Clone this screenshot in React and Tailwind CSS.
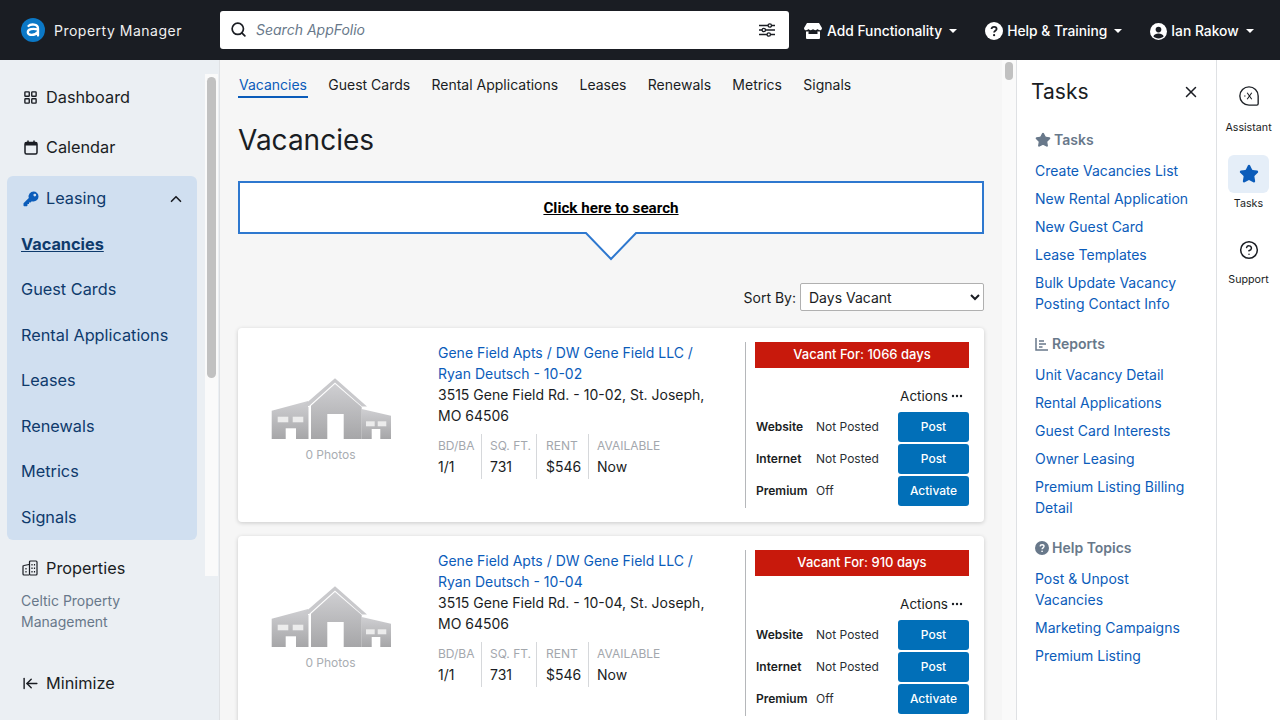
import React from "react";
import {
  Search,
  LayoutGrid,
  ChevronUp,
  X,
  Star,
  CircleHelp,
  ArrowLeftToLine,
} from "lucide-react";

const FONT = { fontFamily: "Inter, 'Noto Sans', sans-serif" };

const leasingItems = ["Guest Cards", "Rental Applications", "Leases", "Renewals", "Metrics", "Signals"];
const tabs = ["Guest Cards", "Rental Applications", "Leases", "Renewals", "Metrics", "Signals"];

const units = [
  { unit: "10-02", days: 1066 },
  { unit: "10-04", days: 910 },
];

function Caret() {
  return <span className="ml-[7px] w-0 h-0 border-x-[4px] border-x-transparent border-t-[4px] border-t-white" />;
}

function Logo() {
  return (
    <svg width="24" height="24" viewBox="0 0 24 24">
      <circle cx="12" cy="12" r="12" fill="#0b78c6" />
      <path
        d="M7.500 8 C9.500 5.800 17 5.600 17 10.500 V17.500 M16.800 11.500 C12 10.300 6.800 11 6.800 14.300 C6.800 17.800 14 18 16.800 14"
        fill="none"
        stroke="white"
        strokeWidth="2.300"
        strokeLinecap="round"
      />
    </svg>
  );
}

function Storefront() {
  return (
    <svg width="18" height="18" viewBox="0 0 18 18" fill="white">
      <path d="M3 1h12l3 5c0 1.500-1 2.300-2.200 2.300-1 0-1.800-.5-2.300-1.200-.5.7-1.400 1.200-2.200 1.200S9.500 7.800 9 7.100c-.5.7-1.300 1.200-2.300 1.200S5 7.800 4.500 7.100C4 7.800 3.200 8.300 2.200 8.300 1 8.300 0 7.500 0 6z" />
      <path d="M2 9.500c1 .2 2 0 2.500-.3V12h9V9.200c.5.3 1.500.5 2.500.3V16a1 1 0 0 1-1 1H3a1 1 0 0 1-1-1z" />
    </svg>
  );
}

function Sliders() {
  return (
    <svg width="16" height="14" viewBox="0 0 16 14" fill="none" stroke="#1a1d23" strokeWidth="1.300">
      <path d="M0 2.500h9M12.500 2.500H16M0 7h3M6.500 7H16M0 11.500h8M11.500 11.500H16" />
      <circle cx="10.800" cy="2.500" r="1.700" />
      <circle cx="4.800" cy="7" r="1.700" />
      <circle cx="9.800" cy="11.500" r="1.700" />
    </svg>
  );
}

function HelpSolid({ size = 18, fill = "white", mark = "#1a1d23" }) {
  return (
    <svg width={size} height={size} viewBox="0 0 18 18">
      <circle cx="9" cy="9" r="9" fill={fill} />
      <path d="M6.500 7c.2-1.500 1.200-2.200 2.600-2.200 1.500 0 2.500.9 2.500 2.100 0 1.900-2.500 1.900-2.500 3.700" fill="none" stroke={mark} strokeWidth="1.800" />
      <circle cx="9.100" cy="13.200" r="1.100" fill={mark} />
    </svg>
  );
}

function UserSolid() {
  return (
    <svg width="17" height="17" viewBox="0 0 18 18">
      <circle cx="9" cy="9" r="9" fill="white" />
      <circle cx="9" cy="7" r="3" fill="#1a1d23" />
      <path d="M3.500 14c1-2.200 3-3 5.500-3s4.500.8 5.500 3c-1.300 1.400-3.300 2.300-5.500 2.300S4.800 15.400 3.500 14z" fill="#1a1d23" />
    </svg>
  );
}

function KeyIcon() {
  return (
    <svg width="16" height="16" viewBox="0 0 16 16" fill="#0b5cba">
      <path d="M10.500 0.500a5 5 0 0 1 0 10c-.6 0-1.200-.1-1.700-.3L7.500 11.500H6v1.500H4.500v1.500l-.7.7H1.200A.7.700 0 0 1 .5 14.500v-2.300l5.300-5.300A5 5 0 0 1 10.500.5zm1.300 2.200a1.400 1.400 0 1 0 0 2.800 1.400 1.400 0 0 0 0-2.800z" />
    </svg>
  );
}

function CalendarIcon() {
  return (
    <svg width="14" height="15" viewBox="0 0 14 15" fill="none">
      <rect x="1" y="2.500" width="12" height="11.500" rx="1.500" stroke="#1a1d23" strokeWidth="1.500" />
      <rect x="1" y="2.500" width="12" height="3" fill="#1a1d23" />
      <path d="M4 0.500v2.500M10 0.500v2.500" stroke="#1a1d23" strokeWidth="1.500" />
    </svg>
  );
}

function BuildingsIcon() {
  return (
    <svg width="16" height="16" viewBox="0 0 16 16" fill="none" stroke="#1a1d23" strokeWidth="1.200">
      <path d="M7 4.500 L2 5.500 a1 1 0 0 0-1 1V14a1 1 0 0 0 1 1h5" />
      <rect x="7.500" y="1" width="7.500" height="14" rx="1" />
      <path d="M10 4v1.500M12.500 4v1.500M10 7.500V9M12.500 7.500V9M10 11v1.500M12.500 11v1.500M4 8v1.500M4 11v1.500" />
    </svg>
  );
}

function AssistantIcon() {
  return (
    <svg width="22" height="24" viewBox="0 0 24 24" fill="none" stroke="#1f2328" strokeWidth="1.500">
      <path d="M12 2a10 10 0 1 0 0 20h8.500a1.500 1.500 0 0 0 1.500-1.500V12A10 10 0 0 0 12 2z" />
      <path d="M10 8.500l5 7M15 8.500l-5 7" strokeWidth="1.200" />
      <circle cx="7.500" cy="12" r=".7" fill="#1f2328" stroke="none" />
    </svg>
  );
}

function ReportsIcon() {
  return (
    <svg width="14" height="14" viewBox="0 0 14 14" fill="none" stroke="#68788a" strokeWidth="1.500">
      <path d="M1 1v12h12M4 4h5M4 7h7M4 10h3.500" />
    </svg>
  );
}

function Warehouse() {
  return (
    <svg width="120" height="64" viewBox="0 0 120 64">
      <defs>
        <linearGradient id="wh" x1="0" y1="0" x2="0" y2="1">
          <stop offset="0" stopColor="#cfcfd2" />
          <stop offset="1" stopColor="#a6a6a8" />
        </linearGradient>
      </defs>
      <path d="M0.700 33.700 L37 24 V30 H37.500 V62 H0.700 Z" fill="url(#wh)" />
      <path d="M90.700 32 L120 38.700 V62 H90.700 Z" fill="url(#wh)" />
      <path d="M64 7 L90.700 30 V62 H40 V28.700 Z" fill="url(#wh)" />
      <path d="M32 29 H38 L64 5.500 L91 29.500 H96 L64 1.300 Z" fill="#c9c9cc" />
      <rect x="6.700" y="39.700" width="10.600" height="5.600" fill="#ececec" />
      <rect x="21.700" y="39.700" width="10.600" height="5.600" fill="#ececec" />
      <rect x="14.700" y="51.300" width="10.300" height="10.700" fill="#fff" />
      <rect x="56.300" y="37" width="16.400" height="25" fill="#fff" />
      <rect x="95" y="44.300" width="8.700" height="5" fill="#ececec" />
      <rect x="106.700" y="44.300" width="8.600" height="5" fill="#ececec" />
      <rect x="100.700" y="52" width="8.600" height="10" fill="#fff" />
    </svg>
  );
}

function Stat({ label, value, className }) {
  return (
    <div className={className}>
      <div className="text-[12px] leading-[20px] text-[#a3a7ad] mt-[2px]">{label}</div>
      <div className="text-[14px] leading-[21px] text-[#1a1d23] pb-[2px]">{value}</div>
    </div>
  );
}

function Posting({ label, status, action }) {
  return (
    <div className="flex items-center h-[32px]">
      <div className="w-[61px] pl-[1px] text-[12px] font-semibold text-[#1a1d23]">{label}</div>
      <div className="flex-1 text-[12px] text-[#2b2f35]">{status}</div>
      <button className="w-[71px] h-[30px] bg-[#016fb8] rounded-[3px] text-white text-[12px] font-medium">{action}</button>
    </div>
  );
}

function VacancyCard({ unit, days }) {
  return (
    <div className="flex bg-white rounded-[4px] shadow-[0_1px_4px_rgba(0,0,0,0.18)] h-[194px] mb-[14px] shrink-0">
      <div className="w-[200px] shrink-0 flex flex-col items-center pt-[49px] pr-[15px]">
        <Warehouse />
        <div className="text-[12px] leading-[14px] text-[#a9adb2] mt-[7px]">0 Photos</div>
      </div>
      <div className="w-[307px] shrink-0 pt-[14px] text-[14px] leading-[21px] text-[#1a1d23]">
        <div className="text-[#0b5cba] w-[280px]">Gene Field Apts / DW Gene Field LLC / Ryan Deutsch - {unit}</div>
        <div className="w-[280px]">3515 Gene Field Rd. - {unit}, St. Joseph, MO 64506</div>
        <div className="flex mt-[8px]">
          <Stat label="BD/BA" value="1/1" className="w-[43px]" />
          <Stat label="SQ. FT." value="731" className="w-[55px] border-l border-[#d6d8db] pl-[8px]" />
          <Stat label="RENT" value="$546" className="w-[52px] border-l border-[#d6d8db] pl-[9px]" />
          <Stat label="AVAILABLE" value="Now" className="border-l border-[#d6d8db] pl-[8px]" />
        </div>
      </div>
      <div className="flex-1 my-[14px] mr-[15px] border-l border-[#b5b7ba] pl-[9px]">
        <div className="h-[26px] bg-[#c8190c] text-white text-[13px] font-medium flex items-center justify-center">
          Vacant For: {days} days
        </div>
        <div className="flex justify-end items-center h-[20px] mt-[18px] mb-[5px] pr-[6px] text-[13.500px] text-[#1a1d23]">
          Actions
          <svg className="ml-[3px]" width="12" height="4" viewBox="0 0 12 4" fill="#1a1d23">
            <circle cx="2" cy="2" r="1.200" />
            <circle cx="6" cy="2" r="1.200" />
            <circle cx="10" cy="2" r="1.200" />
          </svg>
        </div>
        <Posting label="Website" status="Not Posted" action="Post" />
        <Posting label="Internet" status="Not Posted" action="Post" />
        <Posting label="Premium" status="Off" action="Activate" />
      </div>
    </div>
  );
}

function TaskLink({ children }) {
  return <div className="text-[14px] leading-[21px] text-[#0b5cba] mb-[7px]">{children}</div>;
}

function TaskHeading({ icon, children }) {
  return (
    <div className="flex items-center gap-[3px] text-[14px] leading-[21px] font-semibold text-[#68788a] mb-[10px]">
      {icon}
      {children}
    </div>
  );
}

function App() {
  return (
    <div className="w-[1280px] h-[720px] flex flex-col overflow-hidden bg-white" style={FONT}>
      <header className="h-[60px] shrink-0 bg-[#1a1d23] flex items-center text-white">
        <div className="w-[220px] shrink-0 flex items-center pl-[21px] gap-[9px]">
          <Logo />
          <span className="text-[14px] tracking-[0.500px] text-[#f0f0f0]">Property Manager</span>
        </div>
        <div className="w-[569px] h-[38px] bg-white rounded-[3px] flex items-center pl-[10px] pr-[14px] -mt-[1px]">
          <Search size={17} color="#1a1d23" strokeWidth={2.400} />
          <span className="flex-1 ml-[9px] text-[14px] italic text-[#68788a]">Search AppFolio</span>
          <Sliders />
        </div>
        <div className="flex items-center text-[13.800px] font-medium ml-[15px] mt-[2px]">
          <Storefront />
          <span className="ml-[5px]">Add Functionality</span>
          <Caret />
        </div>
        <div className="flex items-center text-[13.800px] font-medium ml-[28px] mt-[2px]">
          <HelpSolid />
          <span className="ml-[4px]">Help &amp; Training</span>
          <Caret />
        </div>
        <div className="flex items-center text-[13.800px] font-medium ml-[28px] mt-[2px]">
          <UserSolid />
          <span className="ml-[4px]">Ian Rakow</span>
          <Caret />
        </div>
      </header>

      <div className="flex flex-1 min-h-0">
        <aside className="w-[220px] shrink-0 bg-[#ebeff3] border-r border-[#dfe1e4] flex flex-col">
          <div className="flex h-[516px] shrink-0">
            <nav className="w-[205px] shrink-0 text-[16.300px] text-[#1a1d23]">
              <div className="h-[50px] mt-[12px] flex items-center pl-[23px] gap-[8px]">
                <LayoutGrid size={15} strokeWidth={2.200} />
                Dashboard
              </div>
              <div className="h-[50px] flex items-center pl-[24px] gap-[8px]">
                <CalendarIcon />
                Calendar
              </div>
              <div className="ml-[7px] w-[190px] h-[364px] mt-[4px] bg-[#d0dff0] rounded-[6px] text-[#0e3a6c]">
                <div className="h-[45px] flex items-center pl-[16px] pr-[12px]">
                  <KeyIcon />
                  <span className="ml-[7px] flex-1">Leasing</span>
                  <ChevronUp size={18} color="#1a1d23" strokeWidth={2.200} />
                </div>
                <div className="h-[45.500px] flex items-center pl-[14px] font-bold underline">Vacancies</div>
                {leasingItems.map((item) => (
                  <div key={item} className="h-[45.600px] flex items-center pl-[14px]">
                    {item}
                  </div>
                ))}
              </div>
              <div className="flex items-center h-[20px] mt-[18px] pl-[22px] gap-[8px]">
                <BuildingsIcon />
                Properties
              </div>
            </nav>
            <div className="w-[13px] mt-[14px] bg-[#fafafa] pt-[3px] px-[2px]">
              <div className="w-[9px] h-[301px] bg-[#c1c1c1] rounded-full" />
            </div>
          </div>
          <div className="pl-[21px] mt-[14px] text-[14px] leading-[21px] text-[#68788a]">
            Celtic Property
            <br />
            Management
          </div>
          <div className="flex items-center h-[20px] pl-[22px] gap-[7px] mt-[41px] text-[16.300px] text-[#1a1d23]">
            <ArrowLeftToLine size={17} />
            Minimize
          </div>
        </aside>

        <main className="flex-1 min-w-0 bg-[#f6f6f6] flex">
          <div className="w-[782px] shrink-0 pl-[18px] pr-[18px] flex flex-col">
            <div className="flex shrink-0 text-[14px] text-[#1a1d23] h-[40px] gap-[21.300px] pt-[14px]">
              <div className="w-[70px] -mr-[1px] text-center text-[#0b5cba] border-b-2 border-[#0b5cba] h-[24px] leading-[22px]">Vacancies</div>
              {tabs.map((t) => (
                <div key={t} className="leading-[22px]">{t}</div>
              ))}
            </div>
            <h1 className="shrink-0 text-[28px] leading-[34px] text-[#1a1d23] mt-[23px]">Vacancies</h1>
            <div className="relative shrink-0 mt-[24px] h-[53px] bg-white border-2 border-[#2e78cf] flex items-center justify-center pt-[2px]">
              <span className="text-[15.200px] font-bold underline text-black" style={{ fontFamily: "Roboto, sans-serif" }}>
                Click here to search
              </span>
              <svg className="absolute left-[344px] top-[49px]" width="54" height="30" viewBox="0 0 54 30">
                <path d="M1 0 L27 27 L53 0" fill="white" stroke="#2e78cf" strokeWidth="2" />
              </svg>
            </div>
            <div className="flex shrink-0 justify-end items-center mt-[49px] h-[28px] text-[14px] text-[#1a1d23]">
              <span className="mr-[4px]">Sort By:</span>
              <select className="w-[184px] h-[28px] bg-white border border-[#b0b0b0] rounded-[2px] pl-[4px] text-[14px] text-[#1a1d23]" defaultValue="Days Vacant">
                <option>Days Vacant</option>
              </select>
            </div>
            <div className="mt-[17px] flex flex-col shrink-0">
              {units.map((u) => (
                <VacancyCard key={u.unit} unit={u.unit} days={u.days} />
              ))}
            </div>
          </div>
          <div className="w-[14px] bg-[#fafafa] pt-[2px] pl-[3px] shrink-0">
            <div className="w-[8px] h-[18px] bg-[#c1c1c1] rounded-full" />
          </div>
        </main>

        <section className="w-[201px] shrink-0 bg-white border-x border-[#dfe1e4] pl-[18px] pr-[18px] flex flex-col">
          <div className="flex items-center justify-between h-[34px] mt-[15px] mb-[20px]">
            <span className="text-[21px] -ml-[4px] text-[#1a1d23]">Tasks</span>
            <X size={18} color="#1a1d23" className="-mr-[2px]" />
          </div>
          <TaskHeading icon={<Star size={16} fill="#68788a" color="#68788a" />}>Tasks</TaskHeading>
          <TaskLink>Create Vacancies List</TaskLink>
          <TaskLink>New Rental Application</TaskLink>
          <TaskLink>New Guest Card</TaskLink>
          <TaskLink>Lease Templates</TaskLink>
          <TaskLink>Bulk Update Vacancy Posting Contact Info</TaskLink>
          <div className="h-[12px]" />
          <TaskHeading icon={<ReportsIcon />}>Reports</TaskHeading>
          <TaskLink>Unit Vacancy Detail</TaskLink>
          <TaskLink>Rental Applications</TaskLink>
          <TaskLink>Guest Card Interests</TaskLink>
          <TaskLink>Owner Leasing</TaskLink>
          <TaskLink>Premium Listing Billing Detail</TaskLink>
          <div className="h-[12px]" />
          <TaskHeading icon={<HelpSolid size={14} fill="#68788a" mark="#fff" />}>Help Topics</TaskHeading>
          <TaskLink>Post &amp; Unpost Vacancies</TaskLink>
          <TaskLink>Marketing Campaigns</TaskLink>
          <TaskLink>Premium Listing</TaskLink>
        </section>

        <div className="w-[63px] shrink-0 bg-white flex flex-col items-center text-[10.700px] text-[#1a1d23]">
          <div className="mt-[24px] mb-[13px] h-[24px]"><AssistantIcon /></div>
          <div className="leading-[14px]">Assistant</div>
          <div className="mt-[20px] w-[41px] h-[38px] rounded-[6px] bg-[#e5eef8] flex items-center justify-center">
            <Star size={20} fill="#0b5cba" color="#0b5cba" />
          </div>
          <div className="leading-[14px] mt-[4px]">Tasks</div>
          <div className="mt-[27px] mb-[11px] h-[24px] flex items-center"><CircleHelp size={20} strokeWidth={1.800} /></div>
          <div className="leading-[14px]">Support</div>
        </div>
      </div>
    </div>
  );
}

export default App;
